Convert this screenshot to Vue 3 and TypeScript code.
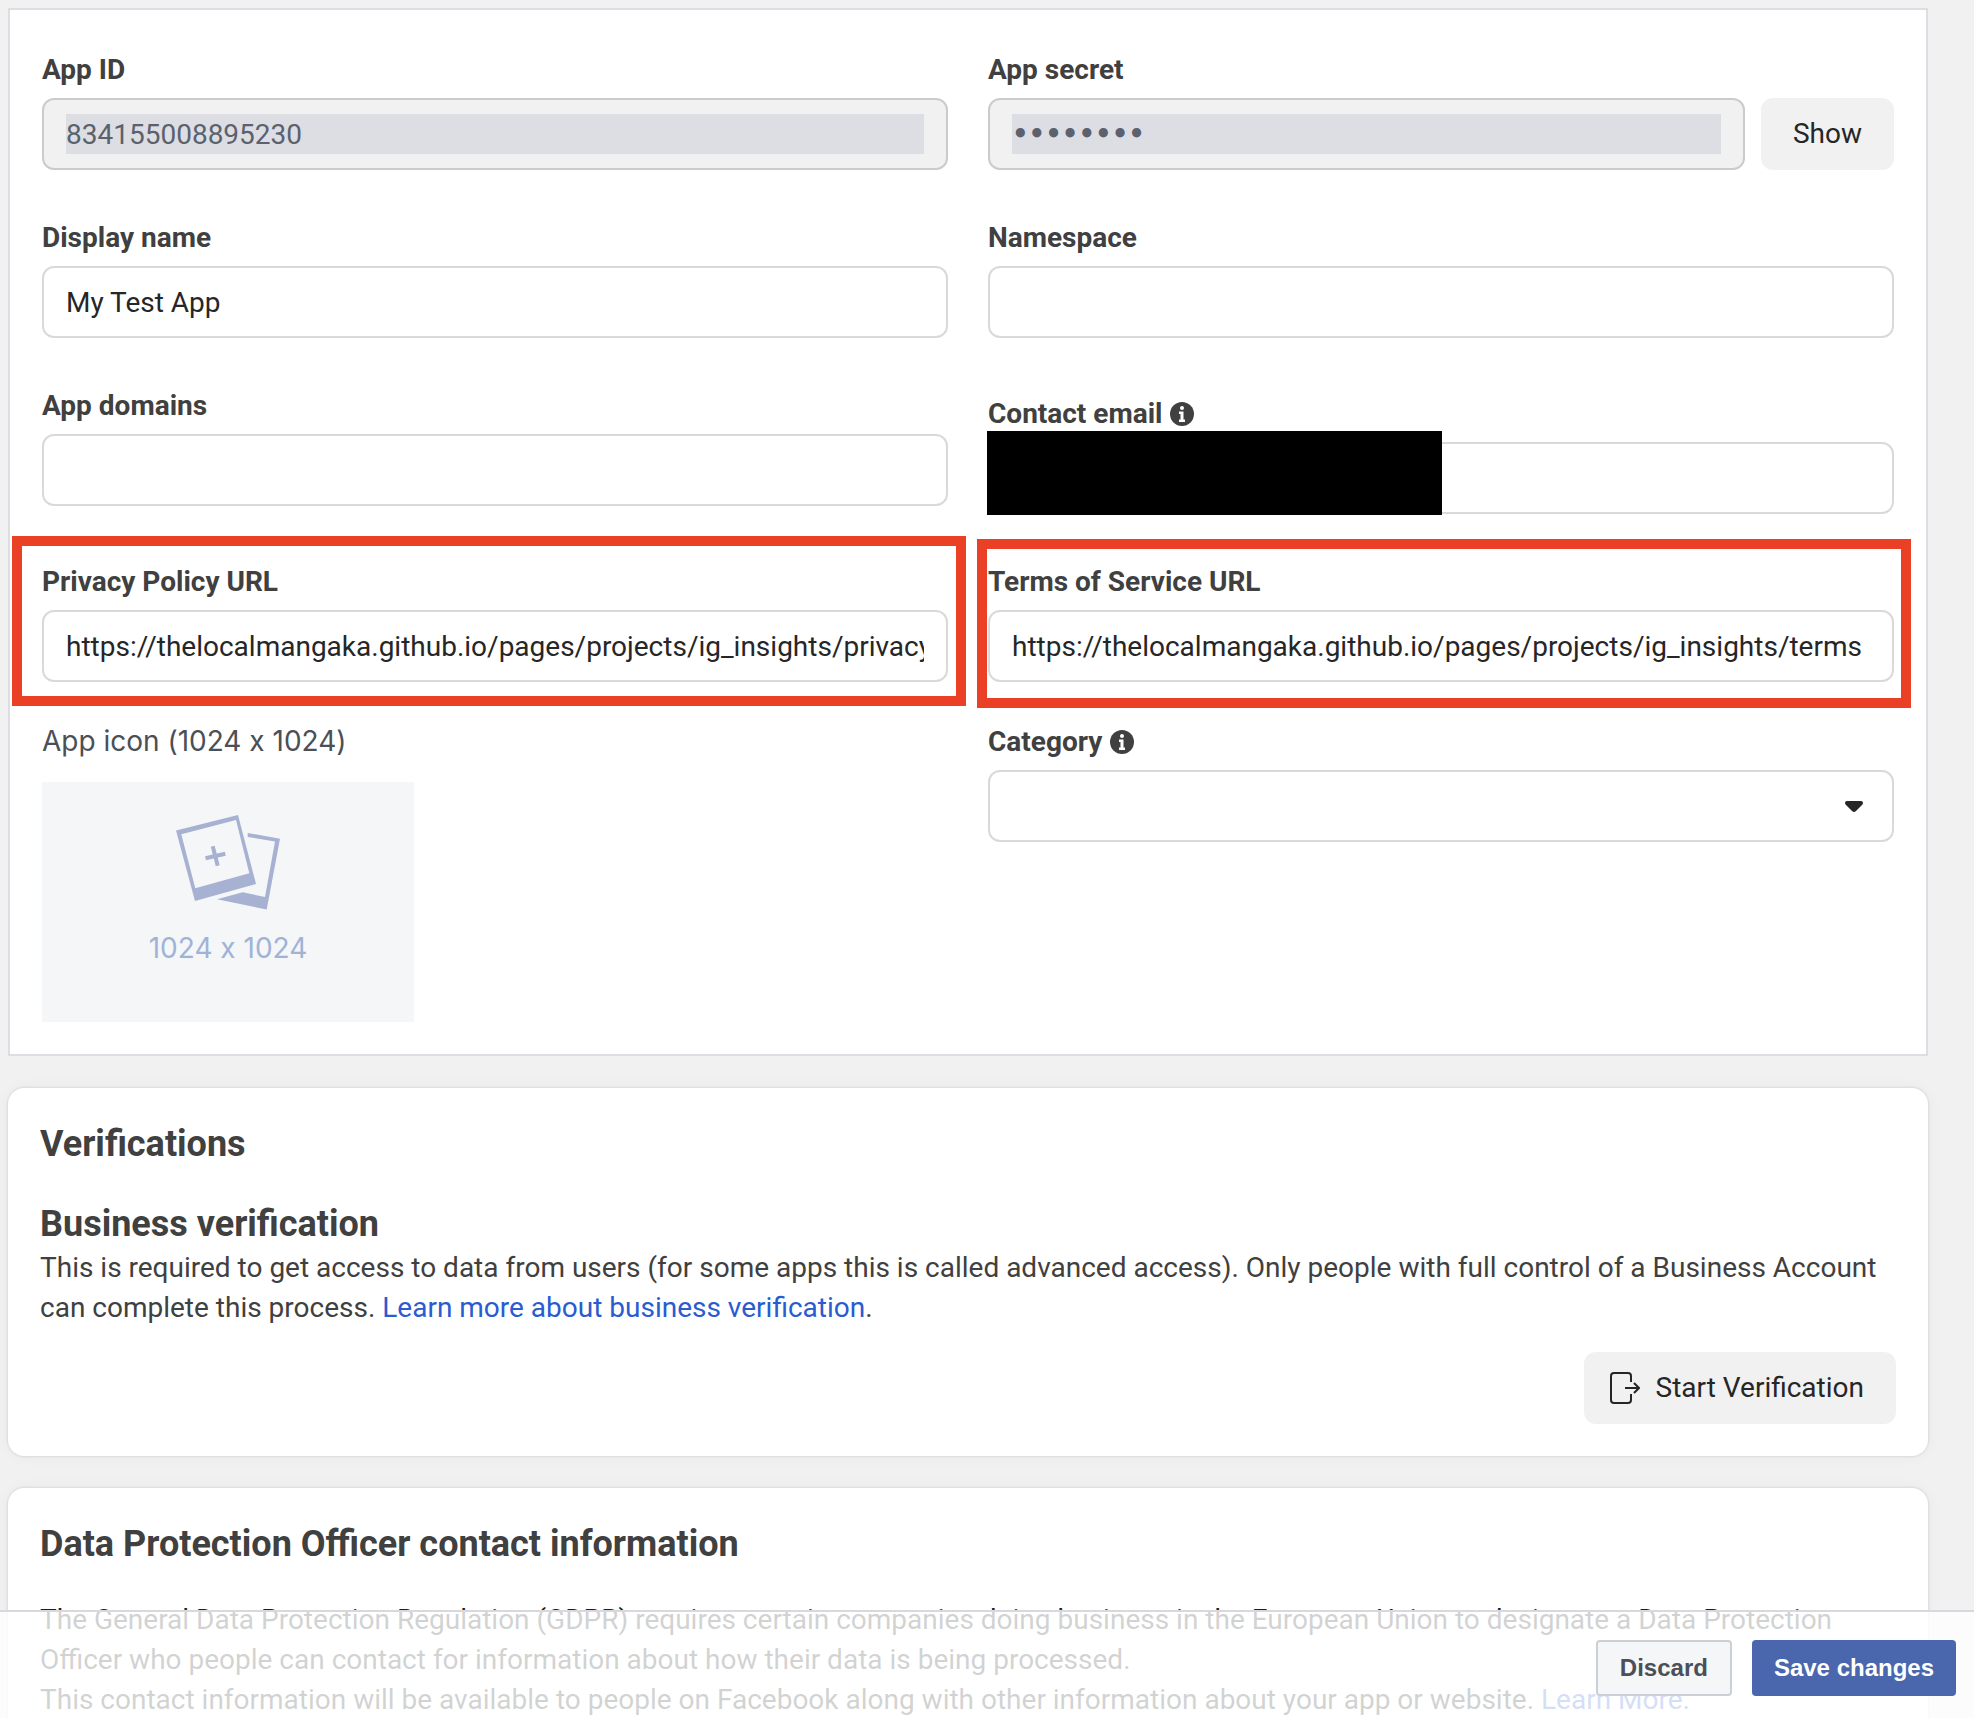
<script setup lang="ts">
import { ref } from 'vue'

const appId = ref('834155008895230')
const appSecret = ref('********')
const displayName = ref('My Test App')
const namespace = ref('')
const appDomains = ref('')
const contactEmail = ref('')
const privacyUrl = ref('https://thelocalmangaka.github.io/pages/projects/ig_insights/privacy')
const termsUrl = ref('https://thelocalmangaka.github.io/pages/projects/ig_insights/terms')
const category = ref('')
</script>

<template>
  <div class="page">
    <main class="content">
      <form class="panel" @submit.prevent>
        <div class="field">
          <label class="label" for="app-id">App ID</label>
          <input id="app-id" v-model="appId" class="input locked" type="text" disabled />
        </div>
        <div class="field">
          <label class="label" for="app-secret">App secret</label>
          <div class="secret-row">
            <input id="app-secret" v-model="appSecret" class="input locked secret" type="password" disabled />
            <button class="soft-button" type="button">Show</button>
          </div>
        </div>

        <div class="field">
          <label class="label" for="display-name">Display name</label>
          <input id="display-name" v-model="displayName" class="input" type="text" />
        </div>
        <div class="field">
          <label class="label" for="namespace">Namespace</label>
          <input id="namespace" v-model="namespace" class="input" type="text" />
        </div>

        <div class="field">
          <label class="label" for="app-domains">App domains</label>
          <input id="app-domains" v-model="appDomains" class="input" type="text" />
        </div>
        <div class="field">
          <label class="label with-info" for="contact-email">
            Contact email
            <svg class="info" viewBox="0 0 24 24" aria-hidden="true">
              <circle cx="12" cy="12" r="12" fill="#404040" />
              <circle cx="12" cy="6" r="2" fill="#fff" />
              <path d="M9 9.500h4.500v8H15V20H9v-2.500h1.500V12H9z" fill="#fff" />
            </svg>
          </label>
          <div class="control">
            <input id="contact-email" v-model="contactEmail" class="input" type="email" />
            <span class="redaction"></span>
          </div>
        </div>

        <div class="field short">
          <div class="control">
            <label class="label" for="privacy-url">Privacy Policy URL</label>
            <input id="privacy-url" v-model="privacyUrl" class="input" type="url" />
            <span class="marker marker-privacy"></span>
          </div>
        </div>
        <div class="field short">
          <div class="control">
            <label class="label" for="terms-url">Terms of Service URL</label>
            <input id="terms-url" v-model="termsUrl" class="input" type="url" />
            <span class="marker marker-terms"></span>
          </div>
        </div>

        <div>
          <label class="icon-label" for="app-icon">App icon (1024 x 1024)</label>
          <button id="app-icon" class="upload" type="button">
            <svg class="photos" viewBox="0 0 104 96" aria-hidden="true">
              <path
                fill="#a7b1d1"
                fill-rule="evenodd"
                d="M0 15.500 62 0 80 69 19 86ZM5.300 19.300 19.300 73.300 73.300 58.300 60 5Z"
              />
              <path
                fill="#a7b1d1"
                d="M71.700 18 104 23.700 90.700 94.500 41 84.300 66.700 77.300 89 82 99 26.500 71.700 22Z"
              />
              <path d="M29.500 43.300 49.300 38.700M36.700 31.300 41.700 50.700" stroke="#a7b1d1" stroke-width="4" />
            </svg>
            <span>1024 x 1024</span>
          </button>
        </div>
        <div>
          <label class="label with-info" for="category">
            Category
            <svg class="info" viewBox="0 0 24 24" aria-hidden="true">
              <circle cx="12" cy="12" r="12" fill="#404040" />
              <circle cx="12" cy="6" r="2" fill="#fff" />
              <path d="M9 9.500h4.500v8H15V20H9v-2.500h1.500V12H9z" fill="#fff" />
            </svg>
          </label>
          <div class="control">
            <select id="category" v-model="category" class="input">
              <option value=""></option>
              <option value="business">Business and pages</option>
            </select>
            <svg class="caret" viewBox="0 0 18 11" aria-hidden="true">
              <path d="M2 0h14q2 0 2 2 0 1-1 2l-6 6q-2 2-4 0L1 4Q0 3 0 2 0 0 2 0z" fill="#262626" />
            </svg>
          </div>
        </div>
      </form>

      <section class="card">
        <h2 class="title">Verifications</h2>
        <h3 class="title">Business verification</h3>
        <p class="copy">
          This is required to get access to data from users (for some apps this is called advanced access). Only people
          with full control of a Business Account can complete this process.
          <a href="#">Learn more about business verification</a>.
        </p>
        <div class="actions">
          <button class="soft-button with-icon" type="button">
            <svg class="exit" viewBox="0 0 32 32" fill="none" stroke="#262626" stroke-width="2" aria-hidden="true">
              <path d="M23 10V4q0-3-3-3H6Q3 1 3 4v24q0 3 3 3h14q3 0 3-3v-6" />
              <path d="M17 16h14M26 11l5 5-5 5" />
            </svg>
            Start Verification
          </button>
        </div>
      </section>

      <section class="card">
        <h2 class="title">Data Protection Officer contact information</h2>
        <p class="copy dark">
          The General Data Protection Regulation (GDPR) requires certain companies doing business in the European Union
          to designate a Data Protection Officer who people can contact for information about how their data is being
          processed.<br />
          This contact information will be available to people on Facebook along with other information about your app
          or website. <a href="#">Learn More.</a>
        </p>
      </section>
    </main>

    <footer class="save-bar">
      <button class="discard" type="button">Discard</button>
      <button class="save" type="button">Save changes</button>
    </footer>
  </div>
</template>

<style>
body {
  background: #f1f1f1;
}
</style>

<style scoped>
.page {
  height: 100vh;
  overflow-y: auto;
  scrollbar-width: none;
  font-family: Roboto, sans-serif;
  font-size: 28px;
  line-height: 40px;
  color: #404040;
}

.page * {
  box-sizing: border-box;
}

button,
input,
select {
  margin: 0;
  font: inherit;
}

.content {
  display: flex;
  flex-direction: column;
  gap: 32px;
  padding: 8px 46px 0 8px;
}

.panel {
  display: grid;
  grid-template-columns: repeat(2, minmax(0, 1fr));
  column-gap: 40px;
  padding: 44px 32px 32px;
  border: 2px solid #dddee3;
  background: #fff;
}

.field {
  padding-bottom: 52px;
}

.field.short {
  padding-bottom: 36px;
}

.label {
  display: block;
  padding-bottom: 12px;
  font-weight: 700;
  line-height: 32px;
}

.label.with-info {
  display: flex;
  align-items: center;
  gap: 8px;
  padding-top: 8px;
}

.info {
  width: 24px;
  height: 24px;
}

.input {
  display: block;
  width: 100%;
  height: 72px;
  padding: 14px 22px;
  border: 2px solid #d9d9d9;
  border-radius: 12px;
  background: #fff;
  color: #262626;
  outline: none;
  appearance: none;
}

.input.locked {
  border-color: #cbcbcb;
  background: linear-gradient(#dddee3, #dddee3) content-box, #f1f1f1;
  color: #5b616d;
}

.input.secret {
  font-family: 'DejaVu Sans', sans-serif;
  font-size: 26px;
  font-weight: 700;
}

.secret-row {
  display: flex;
  gap: 16px;
}

.soft-button {
  display: flex;
  align-items: center;
  gap: 16px;
  flex: none;
  height: 72px;
  padding: 0 32px;
  border: 0;
  border-radius: 12px;
  background: #f1f1f1;
  color: #262626;
}

.soft-button.with-icon {
  padding-left: 24px;
}

.exit {
  width: 32px;
  height: 32px;
}

.control {
  position: relative;
}

.redaction {
  position: absolute;
  top: -11px;
  bottom: -1px;
  left: -1px;
  width: 455px;
  background: #000;
}

.marker {
  position: absolute;
  border: 10px solid #ea4025;
  pointer-events: none;
}

.marker-privacy {
  inset: -30px -18px -24px -30px;
}

.marker-terms {
  inset: -27px -17px -26px -11px;
}

.caret {
  position: absolute;
  top: 31px;
  right: 31px;
  width: 18px;
  height: 11px;
  pointer-events: none;
}

.icon-label {
  display: block;
  padding-bottom: 18px;
  font-family: Inter, sans-serif;
  font-variant-ligatures: no-contextual;
  line-height: 46px;
  color: #4b4f56;
}

.upload {
  display: flex;
  flex-direction: column;
  align-items: center;
  gap: 21px;
  width: 372px;
  height: 240px;
  padding: 33px 0 0;
  border: 0;
  background: #f4f6f8;
  color: #a0b3d6;
  font-family: Inter, sans-serif;
  font-variant-ligatures: no-contextual;
  line-height: 32px;
}

.photos {
  width: 104px;
  height: 96px;
}

.card {
  padding: 32px;
  border-radius: 16px;
  background: #fff;
  box-shadow: 0 0 3px rgba(0, 0, 0, 0.16), 0 0 16px rgba(0, 0, 0, 0.04);
}

.title {
  margin: 0 0 32px;
  font-size: 36px;
  font-weight: 700;
  line-height: 48px;
}

h3.title {
  margin-bottom: 0;
}

.copy {
  margin: 0;
}

.copy.dark {
  color: #1c1e21;
}

a {
  color: #2a5bcf;
  text-decoration: none;
}

.actions {
  display: flex;
  justify-content: flex-end;
  padding-top: 24px;
}

.save-bar {
  position: fixed;
  right: 0;
  bottom: 0;
  left: 0;
  display: flex;
  justify-content: flex-end;
  gap: 20px;
  padding: 28px 18px 22px;
  border-top: 2px solid #d8d8de;
  background: rgba(255, 255, 255, 0.8);
}

.save-bar button {
  height: 56px;
  padding: 0 22px;
  border: 0;
  border-radius: 4px;
  font-family: 'Liberation Sans', Arial, sans-serif;
  font-size: 24px;
  font-weight: 700;
  line-height: 32px;
}

.save-bar .discard {
  border: 2px solid #cccfd6;
  background: #f5f6f8;
  color: #4b4f56;
}

.save-bar .save {
  background: #4a66ad;
  color: #fff;
}
</style>
